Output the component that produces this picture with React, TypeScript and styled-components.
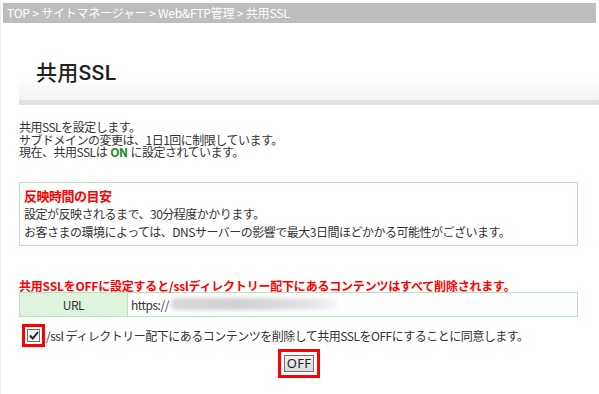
import React from 'react';
import styled, { createGlobalStyle } from 'styled-components';

const GlobalStyle = createGlobalStyle`
  html, body {
    margin: 0;
    padding: 0;
    background: #fff;
  }
  body {
    font-family: "Noto Sans CJK JP", "Noto Sans", sans-serif;
    font-size: 12px;
    color: #333;
  }
`;

const Page = styled.div`
  width: 599px;
  height: 394px;
  padding-top: 3px;
  box-sizing: border-box;
  border-left: 1px solid #f0f0f0;
`;

const Breadcrumb = styled.div`
  margin: 0 3px 0 2px;
  height: 20px;
  line-height: 20px;
  background: #bdbdbd;
  color: #fff;
  font-size: 12px;
  padding-left: 4px;
  letter-spacing: -0.2px;
`;

const TitleBox = styled.div`
  margin: 38px 0 0 18px;
  height: 39px;
  display: flex;
  align-items: flex-start;
  padding-left: 17px;
  background: linear-gradient(to bottom, #fff 0px, #fff 17px, #f3f3f3 38px);
  border-bottom: 5px solid #e2e2e2;
`;

const Title = styled.h1`
  margin: 0;
  font-family: Roboto, "Noto Sans CJK JP", sans-serif;
  font-size: 21px;
  font-weight: 500;
  color: #222;
  line-height: 24px;
  letter-spacing: 0.3px;
`;

const Content = styled.div`
  padding: 15px 21px 0 18px;
  letter-spacing: -0.5px;
`;

const Intro = styled.p`
  margin: 0;
  height: 12.5px;
  line-height: 14px;
  font-size: 12px;
`;

const On = styled.span`
  color: #1a8a1a;
  font-weight: bold;
  margin: 0 3px;
`;

const NoticeBox = styled.div`
  margin-top: 24px;
  border: 1px solid #b8e2b8;
  padding: 4px 4px 3px;
`;

const NoticeTitle = styled.div`
  color: #f00;
  font-weight: bold;
  font-size: 13px;
  line-height: 18px;
`;

const NoticeLine = styled.div`
  line-height: 18.5px;
`;

const Warning = styled.div`
  margin-top: 33px;
  color: #f00;
  font-weight: bold;
  font-size: 12px;
  line-height: 13px;
  letter-spacing: -0.2px;
`;

const Table = styled.div`
  display: grid;
  grid-template-columns: 108px 1fr;
  border: 1px solid #b8e2b8;
  height: 23px;
`;

const HeadCell = styled.div`
  background: #dff4df;
  border-right: 1px solid #b8e2b8;
  display: flex;
  align-items: center;
  justify-content: center;
`;

const ValueCell = styled.div`
  display: flex;
  align-items: center;
  padding-left: 3px;
`;

const Blur = styled.div`
  width: 166px;
  height: 12px;
  margin-left: 2px;
  background: linear-gradient(to right, #d8d8d8, #cfcfcf 40%, #e2e2e2 80%, #f4f4f4);
  filter: blur(2px);
  border-radius: 4px;
`;

const AgreeRow = styled.label`
  display: flex;
  align-items: center;
  margin: 7px 0 0 3px;
`;

const Highlight = styled.span<{ $pad: number }>`
  display: inline-flex;
  border: 3px solid #f00;
  padding: ${p => p.$pad}px;
`;

const CheckBox = styled.span`
  width: 11px;
  height: 11px;
  border: 1px solid #707070;
  background: #f4f4f4;
  display: flex;
  align-items: center;
  justify-content: center;
`;

const AgreeText = styled.span`
  margin-left: 1px;
`;

const ButtonRow = styled.div`
  display: flex;
  justify-content: center;
  margin-top: 2px;
  padding-left: 1px;
`;

const OffButton = styled.button`
  height: 17px;
  padding: 0 2px;
  border: 1px solid #707070;
  background: linear-gradient(to bottom, #f2f2f2, #dcdcdc);
  font-family: "Noto Sans", sans-serif;
  font-size: 13px;
  color: #222;
  line-height: 15px;
  letter-spacing: 0.3px;
`;

const App: React.FC = () => {
  return (
    <Page>
      <GlobalStyle />
      <Breadcrumb>TOP &gt; サイトマネージャー &gt; Web&amp;FTP管理 &gt; 共用SSL</Breadcrumb>
      <TitleBox>
        <Title>共用SSL</Title>
      </TitleBox>
      <Content>
        <Intro>共用SSLを設定します。</Intro>
        <Intro>サブドメインの変更は、1日1回に制限しています。</Intro>
        <Intro>現在、共用SSLは<On>ON</On>に設定されています。</Intro>
        <NoticeBox>
          <NoticeTitle>反映時間の目安</NoticeTitle>
          <NoticeLine>設定が反映されるまで、30分程度かかります。</NoticeLine>
          <NoticeLine>お客さまの環境によっては、DNSサーバーの影響で最大3日間ほどかかる可能性がございます。</NoticeLine>
        </NoticeBox>
        <Warning>共用SSLをOFFに設定すると/sslディレクトリー配下にあるコンテンツはすべて削除されます。</Warning>
        <Table>
          <HeadCell>URL</HeadCell>
          <ValueCell>
            https://
            <Blur />
          </ValueCell>
        </Table>
        <AgreeRow>
          <Highlight $pad={2}>
            <CheckBox>
              <svg width="10" height="9" viewBox="0 0 10 9">
                <path d="M1 4.5 L3.8 7.5 L9 1" fill="none" stroke="#222" strokeWidth="2" />
              </svg>
            </CheckBox>
          </Highlight>
          <AgreeText>/ssl ディレクトリー配下にあるコンテンツを削除して共用SSLをOFFにすることに同意します。</AgreeText>
        </AgreeRow>
        <ButtonRow>
          <Highlight $pad={3}>
            <OffButton>OFF</OffButton>
          </Highlight>
        </ButtonRow>
      </Content>
    </Page>
  );
};

export default App;
